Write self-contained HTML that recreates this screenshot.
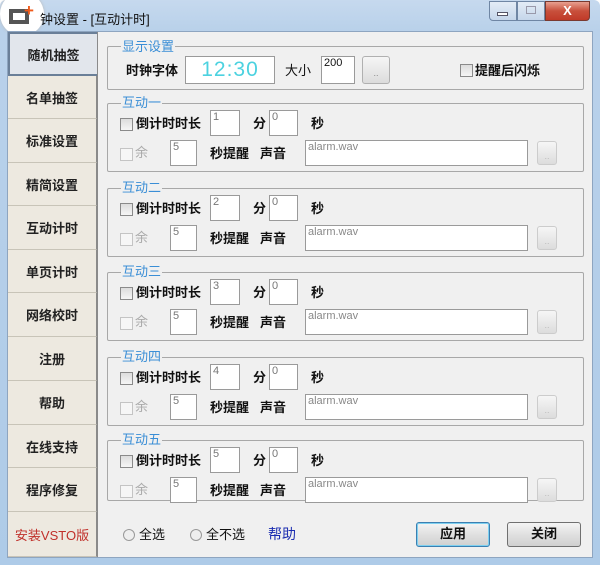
<!DOCTYPE html><html><head><meta charset="utf-8"><style>
*{margin:0;padding:0;box-sizing:border-box}
body{width:600px;height:565px;background:#fff;position:relative;overflow:hidden;font-family:"Liberation Sans","Noto Sans CJK SC",sans-serif;font-size:13px;color:#111}
.a{position:absolute}
.win{left:0;top:0;width:600px;height:565px;background:linear-gradient(#c6d9ee,#b9d1ea 30px,#aecbe8);border-radius:6px 6px 0 0}
.client{left:7px;top:31px;width:586px;height:527px;background:#f0f0f0;border:1px solid #8ea5c0}
.tab{left:8px;width:89px;background:#ede9e0;border-bottom:1px solid #c8c4b8;border-right:1px solid #8a8a8a;display:flex;align-items:center;justify-content:center;font-size:13px;font-weight:bold;color:#222}
.grp{left:107px;width:477px;border:1px solid #a8a8a8;border-radius:2px}
.lg{background:#f0f0f0;color:#3a8ed6;font-size:13px;padding:0 1px;line-height:14px}
.inp{background:#fff;border:1px solid #9a9a9a;font-size:11px;color:#777;padding:0 2px;line-height:13px}
.cb{width:13px;height:13px;border:1px solid #8a8a8a;background:linear-gradient(#ddd,#f5f5f5)}
.cbd{border-color:#c4c4c4;background:#f6f6f6}
.t{font-weight:bold;font-size:13px;line-height:14px}
.btn{border:1px solid #b0b0b0;border-radius:3px;background:linear-gradient(#f6f6f6,#dcdcdc);font-size:9px;color:#888;text-align:center;line-height:18px}
.bb{border:1px solid #707070;border-radius:3px;background:linear-gradient(#f4f4f4,#e0e0e0 50%,#d0d0d0);text-align:center;font-size:13px;font-weight:bold;line-height:22px}
.rd{width:12px;height:12px;border-radius:50%;border:1px solid #999;background:#eee}
</style></head><body>
<div class="a win"></div>
<div class="a" style="left:0;top:-8px;width:44px;height:44px;border-radius:50%;background:#fff;box-shadow:0 0 3px #bbb"></div>
<div class="a" style="left:9px;top:9px;width:20px;height:15px;border:4px solid #555;border-top-color:#555"></div>
<div class="a" style="left:24px;top:4px;color:#f05a1a;font-weight:bold;font-size:17px;line-height:14px">+</div>
<div class="a" style="left:40px;top:9px;font-size:13px;color:#111">钟设置 - [互动计时]</div>
<div class="a" style="left:489px;top:1px;width:28px;height:20px;border:1px solid #6f86a4;border-radius:0 0 0 4px;background:linear-gradient(#e3ecf6,#c5d6ea)"></div>
<div class="a" style="left:497px;top:12px;width:11px;height:4px;border:1px solid #556;background:#fff"></div>
<div class="a" style="left:517px;top:1px;width:28px;height:20px;border:1px solid #6f86a4;background:linear-gradient(#e3ecf6,#c5d6ea)"></div>
<div class="a" style="left:526px;top:6px;width:10px;height:8px;border:1px solid #99a"></div>
<div class="a" style="left:545px;top:1px;width:45px;height:20px;border:1px solid #7a3a30;border-radius:0 0 4px 0;background:linear-gradient(#e8a090,#c8503c 50%,#c03a28);color:#fff;font-weight:bold;text-align:center;font-size:13px;line-height:18px">X</div>
<div class="a client"></div>
<div class="a" style="left:97px;top:32px;width:1px;height:525px;background:#8a8a8a"></div>
<div class="a tab" style="top:32px;height:44px;background:#e2e6ec;border:2px solid #6a7f98;border-right:none">随机抽签</div>
<div class="a tab" style="top:76px;height:43px">名单抽签</div>
<div class="a tab" style="top:119px;height:44px">标准设置</div>
<div class="a tab" style="top:163px;height:43px">精简设置</div>
<div class="a tab" style="top:206px;height:44px">互动计时</div>
<div class="a tab" style="top:250px;height:43px">单页计时</div>
<div class="a tab" style="top:293px;height:44px">网络校时</div>
<div class="a tab" style="top:337px;height:44px">注册</div>
<div class="a tab" style="top:381px;height:44px">帮助</div>
<div class="a tab" style="top:425px;height:43px">在线支持</div>
<div class="a tab" style="top:468px;height:44px">程序修复</div>
<div class="a tab" style="top:512px;height:45px;color:#c0302a;font-weight:normal">安装VSTO版</div>

<div class="a grp" style="top:46px;height:44px"></div>
<div class="a lg" style="left:121px;top:40px">显示设置</div>
<div class="a t" style="left:126px;top:64px">时钟字体</div>
<div class="a" style="left:185px;top:56px;width:90px;height:28px;background:#fff;border:1px solid #9a9a9a;color:#4cd2e0;font-size:21px;text-align:center;line-height:26px;letter-spacing:1px">12:30</div>
<div class="a t" style="left:285px;top:64px;font-weight:normal">大小</div>
<div class="a inp" style="left:321px;top:56px;width:34px;height:28px;color:#111">200</div>
<div class="a btn" style="left:362px;top:56px;width:28px;height:28px;line-height:32px">..</div>
<div class="a cb" style="left:460px;top:64px"></div>
<div class="a t" style="left:475px;top:64px">提醒后闪烁</div>

<div id="g"></div>
<script>
var names=["互动一","互动二","互动三","互动四","互动五"],h="";
[103,188,272,357,440].forEach(function(y,i){
h+='<div class="a grp" style="top:'+y+'px;height:'+(i==4?61:69)+'px"></div>';
h+='<div class="a lg" style="left:121px;top:'+(y-7)+'px">'+names[i]+'</div>';
var r=y+7;
h+='<div class="a cb" style="left:120px;top:'+(r+8)+'px"></div>';
h+='<div class="a t" style="left:136px;top:'+(r+7)+'px">倒计时时长</div>';
h+='<div class="a inp" style="left:210px;top:'+r+'px;width:30px;height:26px">'+(i+1)+'</div>';
h+='<div class="a t" style="left:253px;top:'+(r+7)+'px">分</div>';
h+='<div class="a inp" style="left:269px;top:'+r+'px;width:29px;height:26px">0</div>';
h+='<div class="a t" style="left:311px;top:'+(r+7)+'px">秒</div>';
var s=r+30;
h+='<div class="a cb cbd" style="left:120px;top:'+(s+8)+'px"></div>';
h+='<div class="a" style="left:135px;top:'+(s+6)+'px;color:#aaa;line-height:14px">余</div>';
h+='<div class="a inp" style="left:170px;top:'+s+'px;width:27px;height:26px">5</div>';
h+='<div class="a t" style="left:210px;top:'+(s+7)+'px">秒提醒</div>';
h+='<div class="a t" style="left:260px;top:'+(s+7)+'px">声音</div>';
h+='<div class="a inp" style="left:305px;top:'+s+'px;width:223px;height:26px;color:#888">alarm.wav</div>';
h+='<div class="a btn" style="left:537px;top:'+(s+1)+'px;width:20px;height:24px;border-color:#ccc;line-height:28px;color:#bbb">..</div>';
});
document.getElementById('g').outerHTML=h;
</script>
<div class="a rd" style="left:123px;top:529px"></div>
<div class="a" style="left:139px;top:527px;font-size:13px;line-height:16px">全选</div>
<div class="a rd" style="left:190px;top:529px"></div>
<div class="a" style="left:206px;top:527px;font-size:13px;line-height:16px">全不选</div>
<div class="a" style="left:268px;top:525px;font-size:14px;color:#1a2cb0;line-height:18px">帮助</div>
<div class="a bb" style="left:416px;top:522px;width:74px;height:25px;border-color:#3c7fb1;box-shadow:inset 0 0 0 1px #7ed0f0">应用</div>
<div class="a bb" style="left:507px;top:522px;width:74px;height:25px">关闭</div>
</body></html>
